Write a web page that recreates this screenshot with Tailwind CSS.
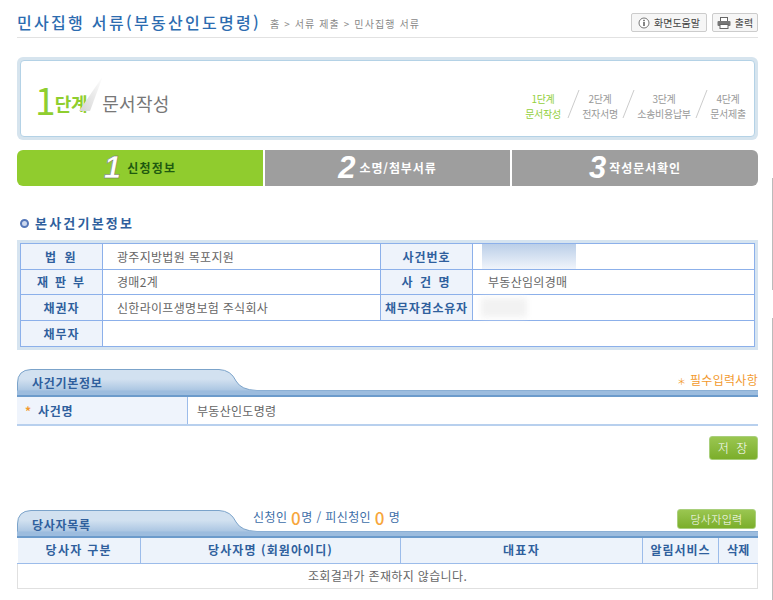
<!DOCTYPE html>
<html lang="ko">
<head>
    <meta charset="UTF-8">
    <meta name="viewport" content="width=device-width, initial-scale=1.0">
    <title>민사집행 서류</title>
    <script src="https://cdn.jsdelivr.net/npm/@tailwindcss/browser@4"></script>
</head>
<body class="relative h-[600px] overflow-hidden bg-white font-['Noto_Sans_CJK_KR','Noto_Sans',sans-serif] text-[12px] tracking-[0.3px] text-[#666]">
    <!-- window edge marks -->
    <div class="absolute right-0 top-[178px] h-[112px] w-px bg-[#bbb]"></div>
    <div class="absolute right-0 top-[318px] h-[282px] w-px bg-[#bbb]"></div>

    <div class="ml-[17px] w-[741px]">
        <!-- title -->
        <div class="flex h-[38px] items-start justify-between border-b border-[#e2e2e2] pt-[12px]">
            <div class="flex items-center">
                <h1 class="text-[16px] leading-[20px] font-medium tracking-[2.3px] text-[#2c6cb0]">민사집행 서류(부동산인도명령)</h1>
                <span class="ml-[9px] mt-[3px] text-[10px] tracking-[1.1px] text-[#888]">홈 &gt; 서류 제출 &gt; 민사집행 서류</span>
            </div>
            <div class="flex gap-[5px] pt-[1px]">
                <button class="flex h-[19px] w-[76px] items-center justify-center gap-[4px] rounded-[2px] border border-[#ccc] bg-[#f6f6f6] text-[10px] tracking-normal text-[#444]">
                    <svg width="12" height="12" viewBox="0 0 12 12"><circle cx="6" cy="6" r="5" fill="#fff" stroke="#777"/><rect x="5.2" y="5" width="1.6" height="4" fill="#666"/><rect x="5.2" y="2.8" width="1.6" height="1.4" fill="#666"/></svg>
                    화면도움말
                </button>
                <button class="flex h-[19px] w-[46px] items-center justify-center gap-[4px] rounded-[2px] border border-[#ccc] bg-[#f6f6f6] text-[10px] tracking-normal text-[#444]">
                    <svg width="14" height="12" viewBox="0 0 14 12"><rect x="3.5" y="0.5" width="7" height="4" fill="#fff" stroke="#666"/><rect x="0.5" y="4" width="13" height="5" rx="1" fill="#777"/><rect x="3" y="7.5" width="8" height="4" fill="#fff" stroke="#666"/></svg>
                    출력
                </button>
            </div>
        </div>

        <!-- step box -->
        <div class="mt-[19px] h-[83px] rounded-[6px] bg-[#d6e4ee] p-[3px]">
            <div class="flex h-full items-center justify-between rounded-[4px] border border-[#b4d2e6] bg-white pl-[14px] pr-[8px]">
                <div class="relative flex items-center pt-[3px]">
                    <span class="mt-[-2px] text-[37px] leading-none font-normal text-[#8fce2f]">1</span>
                    <span class="ml-[-1px] mt-[6px] text-[18px] font-bold tracking-[-0.4px] text-[#8fce2f]">단계</span>
                    <svg class="absolute left-[43px] top-[-5px]" width="26" height="38" viewBox="0 0 26 38">
                        <defs><linearGradient id="fold" x1="0" y1="1" x2="1" y2="0"><stop offset="0" stop-color="#d4d4d4"/><stop offset="0.7" stop-color="#f2f2f2"/><stop offset="1" stop-color="#fff"/></linearGradient></defs>
                        <path d="M1 36 L25 1 L12 36 Z" fill="url(#fold)"/>
                    </svg>
                    <span class="ml-[15px] mt-[6px] text-[18px] tracking-[0.3px] text-[#777]">문서작성</span>
                </div>
                <div class="mt-[15px] flex whitespace-nowrap text-center text-[10px] leading-[15px] tracking-[-0.3px] text-[#999]">
                    <div class="w-[36px] text-[#93cf3c]">1단계<br>문서작성</div>
                    <svg class="ml-[6px] mt-[-2px]" width="14" height="30" viewBox="0 0 14 30"><path d="M1 29 L12 1" stroke="#ccc" fill="none"/></svg>
                    <div class="ml-[1px] w-[36px]">2단계<br>전자서명</div>
                    <svg class="ml-[4px] mt-[-2px]" width="14" height="30" viewBox="0 0 14 30"><path d="M1 29 L12 1" stroke="#ccc" fill="none"/></svg>
                    <div class="ml-[1px] w-[54px]">3단계<br>소송비용납부</div>
                    <svg class="ml-[4px] mt-[-2px]" width="14" height="30" viewBox="0 0 14 30"><path d="M1 29 L12 1" stroke="#ccc" fill="none"/></svg>
                    <div class="ml-[1px] w-[36px]">4단계<br>문서제출</div>
                </div>
            </div>
        </div>

        <!-- wizard tabs -->
        <div class="mt-[10px] flex h-[36px] gap-[2px]">
            <div class="flex w-[246px] items-center justify-center gap-[5px] rounded-l-[6px] bg-[#90cc2e] text-[12px] font-bold tracking-[1.2px] text-[#1f5a10]">
                <span class="font-['Liberation_Sans'] text-[31px] leading-[36px] font-bold italic text-white [-webkit-text-stroke:0.5px_#6c6c6c]">1</span>신청정보
            </div>
            <div class="flex w-[245px] items-center justify-center gap-[3px] bg-[#9e9e9e] text-[12px] font-bold tracking-[0.9px] text-white">
                <span class="font-['Liberation_Sans'] text-[31px] leading-[36px] font-bold italic">2</span>소명/첨부서류
            </div>
            <div class="flex w-[246px] items-center justify-center gap-[2px] rounded-r-[6px] bg-[#9e9e9e] text-[12px] font-bold tracking-[0.9px] text-white">
                <span class="font-['Liberation_Sans'] text-[31px] leading-[36px] font-bold italic">3</span>작성문서확인
            </div>
        </div>

        <!-- basic case info -->
        <div class="mt-[28px] ml-[3px] flex h-[18px] items-center gap-[6px]">
            <span class="h-[9px] w-[9px] rounded-full border-2 border-[#5577b8] bg-[#cdd8ee]"></span>
            <h2 class="text-[13px] font-bold tracking-[2.2px] text-[#2f5f9d]">본사건기본정보</h2>
        </div>
        <div class="mt-[8px] bg-[#d6e4f0] p-[3px]">
            <table class="w-[735px] table-fixed border-collapse bg-white">
                <tbody class="[&_td]:border [&_td]:border-[#8cb0ea] [&_td]:py-0 [&_th]:border [&_th]:border-[#8cb0ea] [&_th]:bg-[#eef3fb] [&_th]:p-0 [&_th]:text-[12px] [&_th]:font-bold [&_th]:text-[#2f5f9d]">
                    <tr class="h-[26px]">
                        <th class="w-[82px] tracking-[2.5px]">법 원</th>
                        <td class="w-[278px] pl-[14px]">광주지방법원 목포지원</td>
                        <th class="w-[92px] tracking-[1px]">사건번호</th>
                        <td class="relative">
                            <div class="absolute left-[9px] top-0 h-full w-[94px] bg-gradient-to-b from-[#bbcfe8] to-[#f0f4fb]"></div>
                        </td>
                    </tr>
                    <tr class="h-[25px]">
                        <th class="tracking-[1.8px]">재 판 부</th>
                        <td class="pl-[14px]">경매2계</td>
                        <th class="tracking-[2px]">사 건 명</th>
                        <td class="pl-[15px]">부동산임의경매</td>
                    </tr>
                    <tr class="h-[26px]">
                        <th class="tracking-[1px]">채권자</th>
                        <td class="pl-[14px]">신한라이프생명보험 주식회사</td>
                        <th class="tracking-[0.8px]">채무자겸소유자</th>
                        <td class="relative">
                            <div class="absolute left-[8px] top-[3px] h-[19px] w-[46px] bg-[#f2f2f2] blur-[3px]"></div>
                        </td>
                    </tr>
                    <tr class="h-[26px]">
                        <th class="tracking-[1px]">채무자</th>
                        <td colspan="3"></td>
                    </tr>
                </tbody>
            </table>
        </div>

        <!-- case section -->
        <div class="relative mt-[19px] h-[28px]">
            <svg class="absolute left-0 top-0" width="741" height="28" viewBox="0 0 741 28">
                <defs><linearGradient id="tabfill" x1="0" y1="0" x2="0" y2="1"><stop offset="0.35" stop-color="#d2e1f0"/><stop offset="1" stop-color="#94b6da"/></linearGradient></defs>
                <path d="M0.5 22 V14 Q0.5 1 14 0.5 H202 Q214 1 219 12 Q224 21 240 21.5 H741 V28 H0.5 Z" fill="url(#tabfill)" stroke="#7ba3ca"/>
                <rect x="0" y="21.5" width="741" height="5" fill="#9cbcde"/>
                <rect x="0" y="26" width="741" height="2" fill="#6c9bcb"/>
            </svg>
            <div class="absolute left-[15px] top-[5px] text-[12px] font-bold tracking-[0.7px] text-[#2f5f9d]">사건기본정보</div>
            <div class="absolute right-0 top-[2px] text-[12px] tracking-[0.3px] text-[#f29a2e]"><span class="text-[9px]">＊</span> 필수입력사항</div>
        </div>
        <div class="flex h-[29px] border-b-2 border-[#b8d0ee]">
            <div class="flex w-[171px] items-center border-r border-[#9cbcea] bg-[#eff4fc] pl-[8px] font-bold tracking-[0.8px] text-[#2f5f9d]">
                <span class="mr-[6px] text-[#f29a2e]">*</span>사건명
            </div>
            <div class="flex items-center pl-[9px]">부동산인도명령</div>
        </div>
        <div class="mt-[10px] flex justify-end">
            <button class="h-[24px] w-[49px] rounded-[3px] border border-[#a9cf7c] bg-gradient-to-b from-[#9ac650] to-[#7bae2a] text-[12px] font-light tracking-[2px] text-white">저 장</button>
        </div>

        <!-- party section -->
        <div class="relative mt-[50px] h-[28px]">
            <svg class="absolute left-0 top-0" width="741" height="28" viewBox="0 0 741 28">
                <path d="M0.5 22 V14 Q0.5 1 14 0.5 H202 Q214 1 219 12 Q224 21 240 21.5 H741 V28 H0.5 Z" fill="url(#tabfill)" stroke="#7ba3ca"/>
                <rect x="0" y="21.5" width="741" height="5" fill="#9cbcde"/>
                <rect x="0" y="26" width="741" height="2" fill="#6c9bcb"/>
            </svg>
            <div class="absolute left-[15px] top-[6px] text-[12px] font-bold tracking-[0.7px] text-[#2f5f9d]">당사자목록</div>
            <div class="absolute left-[236px] top-[-2px] flex items-center text-[12px] tracking-[0.4px] text-[#3d6ea8]">
                신청인&nbsp;<span class="text-[17px] leading-none font-medium text-[#f7a63c]">0</span>명 / 피신청인&nbsp;<span class="text-[17px] leading-none font-medium text-[#f7a63c]">0</span>&nbsp;명
            </div>
            <button class="absolute right-[2px] top-[-1px] h-[20px] w-[79px] rounded-[3px] border border-[#a9cf7c] bg-gradient-to-b from-[#9ac650] to-[#7bae2a] text-[11px] font-light tracking-[0.3px] text-white">당사자입력</button>
        </div>
        <table class="w-[741px] table-fixed border-collapse">
            <thead>
                <tr class="h-[25px] bg-[#edf3fb] text-[12px] font-bold text-[#2f5f9d] [&_th]:border-r [&_th]:border-b [&_th]:border-[#9cbcea] [&_th]:p-0">
                    <th class="w-[123px] tracking-[1.3px]">당사자 구분</th>
                    <th class="w-[260px] tracking-[1.1px]">당사자명 (회원아이디)</th>
                    <th class="w-[242px] tracking-[1.3px]">대표자</th>
                    <th class="w-[76px] tracking-[1px]">알림서비스</th>
                    <th class="!border-r-0">삭제</th>
                </tr>
            </thead>
            <tbody>
                <tr class="h-[25px]">
                    <td colspan="5" class="border border-t-0 border-[#e0e0e0] text-center tracking-[0.35px]">조회결과가 존재하지 않습니다.</td>
                </tr>
            </tbody>
        </table>
    </div>
</body>
</html>
